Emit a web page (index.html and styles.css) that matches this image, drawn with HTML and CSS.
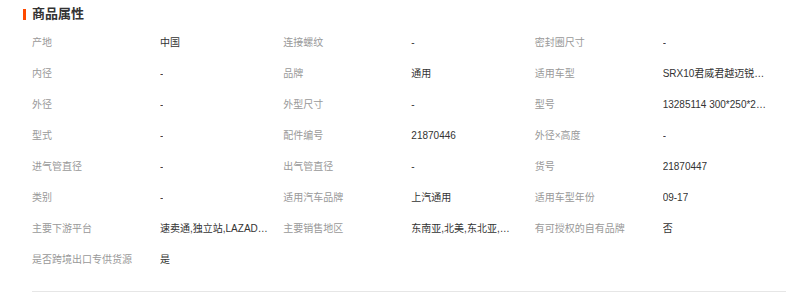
FILE: index.html
```html
<!DOCTYPE html>
<html lang="zh-CN">
<head>
<meta charset="utf-8">
<link rel="stylesheet" href="styles.css">
</head>
<body>
<section class="attrs">
  <h2 class="title">商品属性</h2>
  <div class="grid">
    <div class="item"><span class="label">产地</span><span class="value">中国</span></div>
    <div class="item"><span class="label">连接螺纹</span><span class="value">-</span></div>
    <div class="item"><span class="label">密封圈尺寸</span><span class="value">-</span></div>
    <div class="item"><span class="label">内径</span><span class="value">-</span></div>
    <div class="item"><span class="label">品牌</span><span class="value">通用</span></div>
    <div class="item"><span class="label">适用车型</span><span class="value">SRX10君威君越迈锐宝XL</span></div>
    <div class="item"><span class="label">外径</span><span class="value">-</span></div>
    <div class="item"><span class="label">外型尺寸</span><span class="value">-</span></div>
    <div class="item"><span class="label">型号</span><span class="value">13285114 300*250*220mm</span></div>
    <div class="item"><span class="label">型式</span><span class="value">-</span></div>
    <div class="item"><span class="label">配件编号</span><span class="value">21870446</span></div>
    <div class="item"><span class="label">外径×高度</span><span class="value">-</span></div>
    <div class="item"><span class="label">进气管直径</span><span class="value">-</span></div>
    <div class="item"><span class="label">出气管直径</span><span class="value">-</span></div>
    <div class="item"><span class="label">货号</span><span class="value">21870447</span></div>
    <div class="item"><span class="label">类别</span><span class="value">-</span></div>
    <div class="item"><span class="label">适用汽车品牌</span><span class="value">上汽通用</span></div>
    <div class="item"><span class="label">适用车型年份</span><span class="value">09-17</span></div>
    <div class="item"><span class="label">主要下游平台</span><span class="value">速卖通,独立站,LAZADA,亚马逊</span></div>
    <div class="item"><span class="label">主要销售地区</span><span class="value">东南亚,北美,东北亚,欧洲</span></div>
    <div class="item"><span class="label">有可授权的自有品牌</span><span class="value">否</span></div>
    <div class="item"><span class="label">是否跨境出口专供货源</span><span class="value">是</span></div>
  </div>
</section>
</body>
</html>
```

FILE: styles.css
```css
* { box-sizing: border-box; }
html, body { margin: 0; padding: 0; background: #fff; }
body {
  font-family: "Liberation Sans", "Noto Sans CJK SC", sans-serif;
  font-size: 10px;
  color: #333;
  width: 796px;
}
.attrs {
  padding: 7px 10px 0 23px;
}
.title {
  margin: 0;
  font-size: 13px;
  font-weight: bold;
  line-height: 14px;
  color: #333;
  display: flex;
  align-items: center;
  gap: 6px;
}
.title::before {
  content: "";
  width: 3px;
  height: 11px;
  background: #ff4a00;
}
.grid {
  margin: 6px 0 0 9px;
  width: 754px;
  display: grid;
  grid-template-columns: repeat(3, 1fr);
  padding-bottom: 16px;
  border-bottom: 1px solid #e6e6e6;
}
.item {
  display: flex;
  height: 31px;
  line-height: 31px;
  white-space: nowrap;
}
.label {
  width: 128px;
  flex: none;
  color: #999;
}
.value {
  max-width: 108px;
  overflow: hidden;
  text-overflow: ellipsis;
  color: #333;
}
```
